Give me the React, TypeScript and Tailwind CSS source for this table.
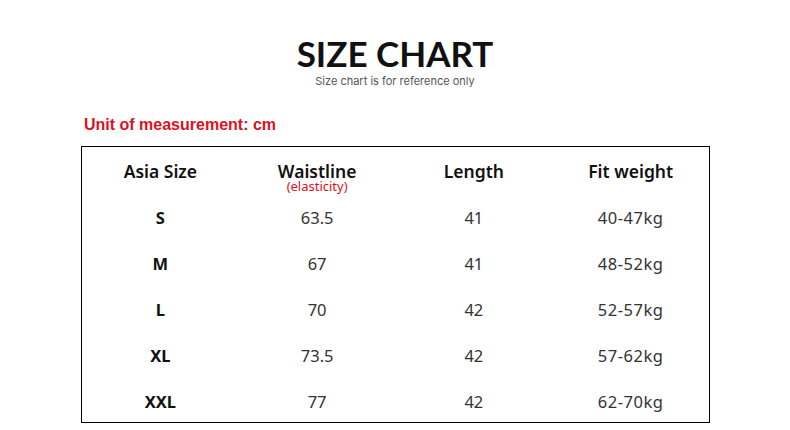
import React from 'react';

const rows = [
    { size: 'S', waist: '63.5', length: '41', weight: '40-47kg' },
    { size: 'M', waist: '67', length: '41', weight: '48-52kg' },
    { size: 'L', waist: '70', length: '42', weight: '52-57kg' },
    { size: 'XL', waist: '73.5', length: '42', weight: '57-62kg' },
    { size: 'XXL', waist: '77', length: '42', weight: '62-70kg' },
];

export default function App() {
    return (
        <div className="w-[790px] h-[430px] bg-white overflow-hidden font-['Noto_Sans',sans-serif]">
            <div className="flex flex-col items-center pt-[33px]">
                <h1 className="font-['Lato',sans-serif] font-bold text-[35px] leading-[40px] text-[#111]">SIZE CHART</h1>
                <p className="font-['Inter',sans-serif] text-[11px] leading-[14px] text-[#555] mt-[1px]">Size chart is for reference only</p>
            </div>
            <p className="ml-[84px] mt-[27px] text-[16px] leading-[20px] font-bold text-[#e0101c] font-['Liberation_Sans',sans-serif]">Unit of measurement: cm</p>
            <div className="ml-[81px] mt-[11px] w-[629px] h-[277px] border border-black">
                <div className="grid grid-cols-4 h-[48px] items-center pt-[1px] text-[17.5px] font-semibold text-[#111]">
                    <div className="text-center">Asia Size</div>
                    <div className="flex flex-col items-center pt-[11px]">
                        <span className="leading-[18px]">Waistline</span>
                        <span className="text-[13px] font-normal leading-[13px] text-[#e0101c]">(elasticity)</span>
                    </div>
                    <div className="text-center">Length</div>
                    <div className="text-center">Fit weight</div>
                </div>
                {rows.map((r) => (
                    <div key={r.size} className="grid grid-cols-4 h-[46px] items-center text-[16.5px] text-[#333]">
                        <div className="text-center font-bold text-[#111]">{r.size}</div>
                        <div className="text-center">{r.waist}</div>
                        <div className="text-center">{r.length}</div>
                        <div className="text-center tracking-[0.5px]">{r.weight}</div>
                    </div>
                ))}
            </div>
        </div>
    );
}
